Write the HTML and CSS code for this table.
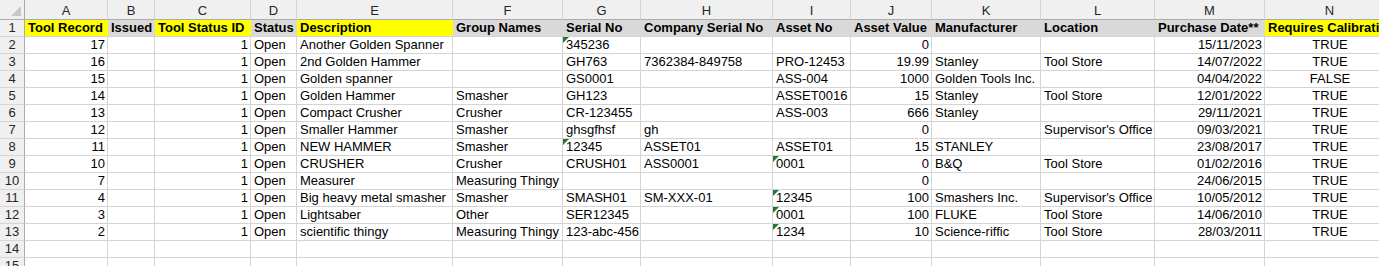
FILE: index.html
```html
<!DOCTYPE html>
<html>
<head>
<meta charset="utf-8">
<link rel="stylesheet" href="styles.css">
</head>
<body>
<div class="sheet">
  <div class="ch corner"><span class="corner-tri"></span></div>
  <div class="ch">A</div><div class="ch">B</div><div class="ch">C</div><div class="ch">D</div><div class="ch">E</div><div class="ch">F</div><div class="ch">G</div><div class="ch">H</div><div class="ch">I</div><div class="ch">J</div><div class="ch">K</div><div class="ch">L</div><div class="ch">M</div><div class="ch">N</div>

  <div class="rh">1</div>
  <div class="hd y">Tool Record</div><div class="hd">Issued</div><div class="hd y">Tool Status ID</div><div class="hd">Status</div><div class="hd y">Description</div><div class="hd">Group Names</div><div class="hd">Serial No</div><div class="hd">Company Serial No</div><div class="hd">Asset No</div><div class="hd">Asset Value</div><div class="hd">Manufacturer</div><div class="hd">Location</div><div class="hd">Purchase Date**</div><div class="hd y">Requires Calibration</div>

  <div class="rh">2</div>
  <div class="c r">17</div><div class="c"></div><div class="c r">1</div><div class="c">Open</div><div class="c">Another Golden Spanner</div><div class="c"></div><div class="c t">345236</div><div class="c"></div><div class="c"></div><div class="c r">0</div><div class="c"></div><div class="c"></div><div class="c r">15/11/2023</div><div class="c m">TRUE</div>

  <div class="rh">3</div>
  <div class="c r">16</div><div class="c"></div><div class="c r">1</div><div class="c">Open</div><div class="c">2nd Golden Hammer</div><div class="c"></div><div class="c">GH763</div><div class="c">7362384-849758</div><div class="c">PRO-12453</div><div class="c r">19.99</div><div class="c">Stanley</div><div class="c">Tool Store</div><div class="c r">14/07/2022</div><div class="c m">TRUE</div>

  <div class="rh">4</div>
  <div class="c r">15</div><div class="c"></div><div class="c r">1</div><div class="c">Open</div><div class="c">Golden spanner</div><div class="c"></div><div class="c">GS0001</div><div class="c"></div><div class="c">ASS-004</div><div class="c r">1000</div><div class="c">Golden Tools Inc.</div><div class="c"></div><div class="c r">04/04/2022</div><div class="c m">FALSE</div>

  <div class="rh">5</div>
  <div class="c r">14</div><div class="c"></div><div class="c r">1</div><div class="c">Open</div><div class="c">Golden Hammer</div><div class="c">Smasher</div><div class="c">GH123</div><div class="c"></div><div class="c">ASSET0016</div><div class="c r">15</div><div class="c">Stanley</div><div class="c">Tool Store</div><div class="c r">12/01/2022</div><div class="c m">TRUE</div>

  <div class="rh">6</div>
  <div class="c r">13</div><div class="c"></div><div class="c r">1</div><div class="c">Open</div><div class="c">Compact Crusher</div><div class="c">Crusher</div><div class="c">CR-123455</div><div class="c"></div><div class="c">ASS-003</div><div class="c r">666</div><div class="c">Stanley</div><div class="c"></div><div class="c r">29/11/2021</div><div class="c m">TRUE</div>

  <div class="rh">7</div>
  <div class="c r">12</div><div class="c"></div><div class="c r">1</div><div class="c">Open</div><div class="c">Smaller Hammer</div><div class="c">Smasher</div><div class="c">ghsgfhsf</div><div class="c">gh</div><div class="c"></div><div class="c r">0</div><div class="c"></div><div class="c">Supervisor's Office</div><div class="c r">09/03/2021</div><div class="c m">TRUE</div>

  <div class="rh">8</div>
  <div class="c r">11</div><div class="c"></div><div class="c r">1</div><div class="c">Open</div><div class="c">NEW HAMMER</div><div class="c">Smasher</div><div class="c t">12345</div><div class="c">ASSET01</div><div class="c">ASSET01</div><div class="c r">15</div><div class="c">STANLEY</div><div class="c"></div><div class="c r">23/08/2017</div><div class="c m">TRUE</div>

  <div class="rh">9</div>
  <div class="c r">10</div><div class="c"></div><div class="c r">1</div><div class="c">Open</div><div class="c">CRUSHER</div><div class="c">Crusher</div><div class="c">CRUSH01</div><div class="c">ASS0001</div><div class="c t">0001</div><div class="c r">0</div><div class="c">B&amp;Q</div><div class="c">Tool Store</div><div class="c r">01/02/2016</div><div class="c m">TRUE</div>

  <div class="rh">10</div>
  <div class="c r">7</div><div class="c"></div><div class="c r">1</div><div class="c">Open</div><div class="c">Measurer</div><div class="c">Measuring Thingy</div><div class="c"></div><div class="c"></div><div class="c"></div><div class="c r">0</div><div class="c"></div><div class="c"></div><div class="c r">24/06/2015</div><div class="c m">TRUE</div>

  <div class="rh">11</div>
  <div class="c r">4</div><div class="c"></div><div class="c r">1</div><div class="c">Open</div><div class="c">Big heavy metal smasher</div><div class="c">Smasher</div><div class="c">SMASH01</div><div class="c">SM-XXX-01</div><div class="c t">12345</div><div class="c r">100</div><div class="c">Smashers Inc.</div><div class="c">Supervisor's Office</div><div class="c r">10/05/2012</div><div class="c m">TRUE</div>

  <div class="rh">12</div>
  <div class="c r">3</div><div class="c"></div><div class="c r">1</div><div class="c">Open</div><div class="c">Lightsaber</div><div class="c">Other</div><div class="c">SER12345</div><div class="c"></div><div class="c t">0001</div><div class="c r">100</div><div class="c">FLUKE</div><div class="c">Tool Store</div><div class="c r">14/06/2010</div><div class="c m">TRUE</div>

  <div class="rh">13</div>
  <div class="c r">2</div><div class="c"></div><div class="c r">1</div><div class="c">Open</div><div class="c">scientific thingy</div><div class="c">Measuring Thingy</div><div class="c">123-abc-456</div><div class="c"></div><div class="c t">1234</div><div class="c r">10</div><div class="c">Science-riffic</div><div class="c">Tool Store</div><div class="c r">28/03/2011</div><div class="c m">TRUE</div>

  <div class="rh">14</div>
  <div class="c"></div><div class="c"></div><div class="c"></div><div class="c"></div><div class="c"></div><div class="c"></div><div class="c"></div><div class="c"></div><div class="c"></div><div class="c"></div><div class="c"></div><div class="c"></div><div class="c"></div><div class="c"></div>

  <div class="rh">15</div>
  <div class="c"></div><div class="c"></div><div class="c"></div><div class="c"></div><div class="c"></div><div class="c"></div><div class="c"></div><div class="c"></div><div class="c"></div><div class="c"></div><div class="c"></div><div class="c"></div><div class="c"></div><div class="c"></div>
</div>
</body>
</html>
```

FILE: styles.css
```css
html, body {
  margin: 0;
  padding: 0;
  background: #ffffff;
  overflow: hidden;
}

.sheet {
  display: grid;
  grid-template-columns: 25px 83px 47px 96px 46px 156px 110px 78px 132px 78px 81px 109px 114px 110px 130px;
  grid-template-rows: 20px repeat(15, 17px);
  font-family: "Liberation Sans", Arial, sans-serif;
  font-size: 13px;
  color: #000;
  width: 1395px;
}

.sheet > div {
  box-sizing: border-box;
  white-space: nowrap;
  overflow: hidden;
}

.ch {
  background: #f0f0f0;
  border-right: 1px solid #d5d5d5;
  border-bottom: 1px solid #ababab;
  text-align: center;
  line-height: 16px;
  padding-top: 3px;
  color: #262626;
}

.corner {
  position: relative;
  border-right: 1px solid #ababab;
}

.corner-tri {
  position: absolute;
  right: 3px;
  bottom: 3px;
  width: 0;
  height: 0;
  border-left: 10px solid transparent;
  border-bottom: 10px solid #c8c8c8;
}

.rh {
  background: #f0f0f0;
  border-right: 1px solid #ababab;
  border-bottom: 1px solid #d5d5d5;
  text-align: center;
  line-height: 16px;
  color: #262626;
}

.hd {
  background: #d9d9d9;
  font-weight: bold;
  line-height: 16px;
  padding-left: 3px;
  border-bottom: 1px solid #d4d4d4;
}

.hd.y {
  background: #ffff00;
}

.c {
  border-right: 1px solid #d4d4d4;
  border-bottom: 1px solid #d4d4d4;
  line-height: 16px;
  padding: 0 2px 0 3px;
  position: relative;
}

.c.r {
  text-align: right;
}

.c.m {
  text-align: center;
}

.c.t::before {
  content: "";
  position: absolute;
  left: 0;
  top: 0;
  width: 0;
  height: 0;
  border-top: 6px solid #1f7a3a;
  border-right: 6px solid transparent;
}
```
